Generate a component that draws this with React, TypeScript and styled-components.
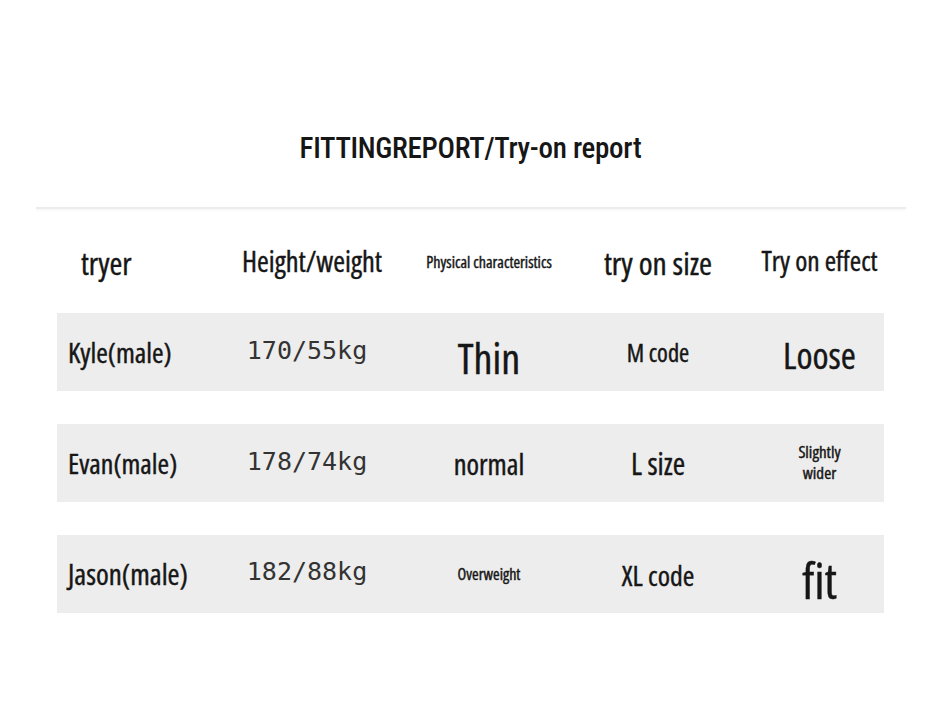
import styled, { createGlobalStyle } from 'styled-components';

const GlobalStyle = createGlobalStyle`
  html, body {
    margin: 0;
    padding: 0;
    background: #fff;
  }
  body {
    font-family: 'Open Sans', 'DejaVu Sans Condensed', sans-serif;
    color: #161616;
  }
`;

const Page = styled.div`
  width: 941px;
  height: 706px;
  display: flex;
  flex-direction: column;
  align-items: center;
  padding-top: 128px;
  box-sizing: border-box;
`;

const Title = styled.h1`
  margin: 0;
  font-family: Roboto, sans-serif;
  font-size: 29px;
  font-weight: 500;
  line-height: 40px;
  letter-spacing: -0.3px;
  text-align: center;
  font-stretch: 75%;
`;

const Rule = styled.div`
  width: 870px;
  height: 2px;
  margin-top: 39px;
  background: #ececec;
  box-shadow: 0 1px 3px rgba(0, 0, 0, 0.06);
`;

const Table = styled.div`
  width: 827px;
  display: flex;
  flex-direction: column;
  gap: 33px;
  margin-top: 2px;
`;

const Row = styled.div<{ $head?: boolean }>`
  display: grid;
  grid-template-columns: 150px 210px 144px 194px 129px;
  align-items: center;
  height: ${(p) => (p.$head ? '102px' : '78px')};
  margin-bottom: ${(p) => (p.$head ? '-33px' : '0')};
  background: ${(p) => (p.$head ? 'transparent' : '#ededed')};
`;

const Cell = styled.div<{ $size: number; $left?: number; $dy?: number; $mono?: boolean }>`
  font-size: ${(p) => p.$size}px;
  font-family: ${(p) => (p.$mono ? "'DejaVu Sans Mono', monospace" : 'inherit')};
  font-weight: ${(p) => (p.$mono ? 400 : 500)};
  color: ${(p) => (p.$mono ? '#333' : 'inherit')};
  -webkit-text-stroke: ${(p) => (p.$mono ? 0 : 0.4)}px currentColor;
  text-align: ${(p) => (p.$left !== undefined ? 'left' : 'center')};
  padding-left: ${(p) => p.$left ?? 0}px;
  padding-right: ${(p) => (p.$mono ? 10 : 0)}px;
  transform: translateY(${(p) => p.$dy ?? 0}px);
  line-height: 1.3;
  white-space: nowrap;
  font-stretch: 75%;
`;

type CellData = { text: string; size: number; dy?: number; mono?: boolean };

const rows: CellData[][] = [
  [
    { text: 'Kyle(male)', size: 28, dy: 0 },
    { text: '170/55kg', size: 25, mono: true, dy: -1 },
    { text: 'Thin', size: 42, dy: 6 },
    { text: 'M code', size: 24.5, dy: 1 },
    { text: 'Loose', size: 36.5, dy: 4 },
  ],
  [
    { text: 'Evan(male)', size: 28, dy: 0 },
    { text: '178/74kg', size: 25, mono: true, dy: -1 },
    { text: 'normal', size: 28.5, dy: 2 },
    { text: 'L size', size: 30, dy: 0 },
    { text: 'Slightly\nwider', size: 17 },
  ],
  [
    { text: 'Jason(male)', size: 29, dy: 0 },
    { text: '182/88kg', size: 25, mono: true, dy: -2 },
    { text: 'Overweight', size: 16, dy: 0 },
    { text: 'XL code', size: 28, dy: 1 },
    { text: 'fit', size: 49, dy: 7 },
  ],
];

const SmallLines = styled.span`
  display: inline-block;
  white-space: pre-line;
  line-height: 21px;
`;

export default function App() {
  return (
    <>
      <GlobalStyle />
      <Page>
        <Title>FITTINGREPORT/Try-on report</Title>
        <Rule />
        <Table>
          <Row $head>
            <Cell $size={31} $left={24} $dy={1}>tryer</Cell>
            <Cell $size={28.5}>Height/weight</Cell>
            <Cell $size={16}>Physical characteristics</Cell>
            <Cell $size={31.5} $dy={1}>try on size</Cell>
            <Cell $size={27.5} $dy={-1}>Try on effect</Cell>
          </Row>
          {rows.map((r, i) => (
            <Row key={i}>
              {r.map((c, j) => (
                <Cell key={j} $size={c.size} $dy={c.dy} $mono={c.mono} $left={j === 0 ? 11 : undefined}>
                  {c.text.includes('\n') ? <SmallLines>{c.text}</SmallLines> : c.text}
                </Cell>
              ))}
            </Row>
          ))}
        </Table>
      </Page>
    </>
  );
}
